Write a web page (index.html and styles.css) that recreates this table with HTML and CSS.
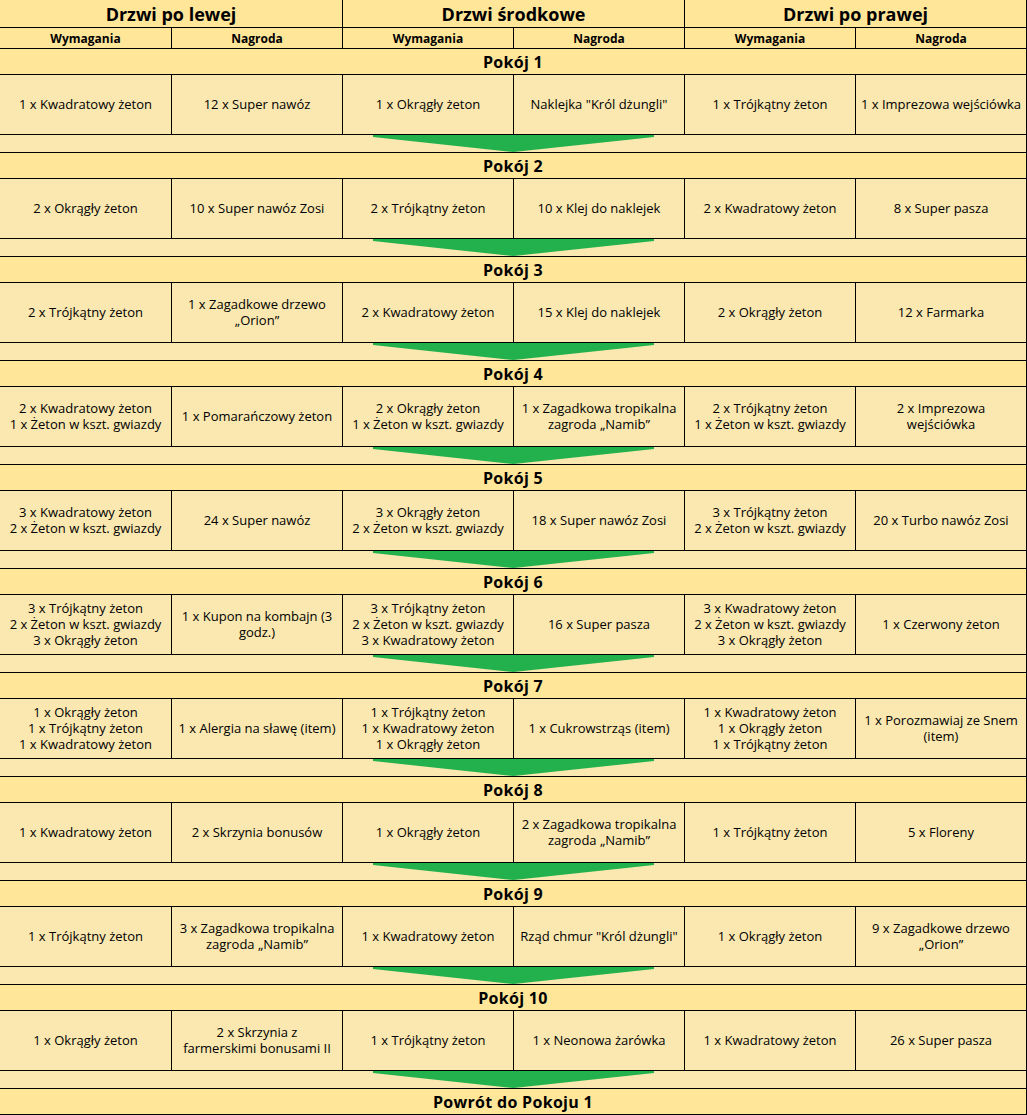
FILE: index.html
```html
<!DOCTYPE html>
<html lang="pl">
<head>
<meta charset="utf-8">
<link rel="stylesheet" href="styles.css">
</head>
<body>
<div class="grid">
  <div class="door span2">Drzwi po lewej</div>
  <div class="door span2">Drzwi środkowe</div>
  <div class="door span2">Drzwi po prawej</div>

  <div class="sub">Wymagania</div><div class="sub">Nagroda</div>
  <div class="sub">Wymagania</div><div class="sub">Nagroda</div>
  <div class="sub">Wymagania</div><div class="sub">Nagroda</div>

  <div class="room span6">Pokój 1</div>
  <div class="cell">1 x Kwadratowy żeton</div>
  <div class="cell">12 x Super nawóz</div>
  <div class="cell">1 x Okrągły żeton</div>
  <div class="cell">Naklejka "Król dżungli"</div>
  <div class="cell">1 x Trójkątny żeton</div>
  <div class="cell">1 x Imprezowa wejściówka</div>
  <div class="arrow span6"><svg width="281" height="17" viewBox="0 0 281 17"><polygon points="0,0 281,0 281,2 140.5,17 0,2" fill="#22b14c"/></svg></div>

  <div class="room span6">Pokój 2</div>
  <div class="cell">2 x Okrągły żeton</div>
  <div class="cell">10 x Super nawóz Zosi</div>
  <div class="cell">2 x Trójkątny żeton</div>
  <div class="cell">10 x Klej do naklejek</div>
  <div class="cell">2 x Kwadratowy żeton</div>
  <div class="cell">8 x Super pasza</div>
  <div class="arrow span6"><svg width="281" height="17" viewBox="0 0 281 17"><polygon points="0,0 281,0 281,2 140.5,17 0,2" fill="#22b14c"/></svg></div>

  <div class="room span6">Pokój 3</div>
  <div class="cell">2 x Trójkątny żeton</div>
  <div class="cell">1 x Zagadkowe drzewo<br>„Orion”</div>
  <div class="cell">2 x Kwadratowy żeton</div>
  <div class="cell">15 x Klej do naklejek</div>
  <div class="cell">2 x Okrągły żeton</div>
  <div class="cell">12 x Farmarka</div>
  <div class="arrow span6"><svg width="281" height="17" viewBox="0 0 281 17"><polygon points="0,0 281,0 281,2 140.5,17 0,2" fill="#22b14c"/></svg></div>

  <div class="room span6">Pokój 4</div>
  <div class="cell">2 x Kwadratowy żeton<br>1 x Żeton w kszt. gwiazdy</div>
  <div class="cell">1 x Pomarańczowy żeton</div>
  <div class="cell">2 x Okrągły żeton<br>1 x Żeton w kszt. gwiazdy</div>
  <div class="cell">1 x Zagadkowa tropikalna<br>zagroda „Namib”</div>
  <div class="cell">2 x Trójkątny żeton<br>1 x Żeton w kszt. gwiazdy</div>
  <div class="cell">2 x Imprezowa<br>wejściówka</div>
  <div class="arrow span6"><svg width="281" height="17" viewBox="0 0 281 17"><polygon points="0,0 281,0 281,2 140.5,17 0,2" fill="#22b14c"/></svg></div>

  <div class="room span6">Pokój 5</div>
  <div class="cell">3 x Kwadratowy żeton<br>2 x Żeton w kszt. gwiazdy</div>
  <div class="cell">24 x Super nawóz</div>
  <div class="cell">3 x Okrągły żeton<br>2 x Żeton w kszt. gwiazdy</div>
  <div class="cell">18 x Super nawóz Zosi</div>
  <div class="cell">3 x Trójkątny żeton<br>2 x Żeton w kszt. gwiazdy</div>
  <div class="cell">20 x Turbo nawóz Zosi</div>
  <div class="arrow span6"><svg width="281" height="17" viewBox="0 0 281 17"><polygon points="0,0 281,0 281,2 140.5,17 0,2" fill="#22b14c"/></svg></div>

  <div class="room span6">Pokój 6</div>
  <div class="cell">3 x Trójkątny żeton<br>2 x Żeton w kszt. gwiazdy<br>3 x Okrągły żeton</div>
  <div class="cell">1 x Kupon na kombajn (3<br>godz.)</div>
  <div class="cell">3 x Trójkątny żeton<br>2 x Żeton w kszt. gwiazdy<br>3 x Kwadratowy żeton</div>
  <div class="cell">16 x Super pasza</div>
  <div class="cell">3 x Kwadratowy żeton<br>2 x Żeton w kszt. gwiazdy<br>3 x Okrągły żeton</div>
  <div class="cell">1 x Czerwony żeton</div>
  <div class="arrow span6"><svg width="281" height="17" viewBox="0 0 281 17"><polygon points="0,0 281,0 281,2 140.5,17 0,2" fill="#22b14c"/></svg></div>

  <div class="room span6">Pokój 7</div>
  <div class="cell">1 x Okrągły żeton<br>1 x Trójkątny żeton<br>1 x Kwadratowy żeton</div>
  <div class="cell">1 x Alergia na sławę (item)</div>
  <div class="cell">1 x Trójkątny żeton<br>1 x Kwadratowy żeton<br>1 x Okrągły żeton</div>
  <div class="cell">1 x Cukrowstrząs (item)</div>
  <div class="cell">1 x Kwadratowy żeton<br>1 x Okrągły żeton<br>1 x Trójkątny żeton</div>
  <div class="cell">1 x Porozmawiaj ze Snem<br>(item)</div>
  <div class="arrow span6"><svg width="281" height="17" viewBox="0 0 281 17"><polygon points="0,0 281,0 281,2 140.5,17 0,2" fill="#22b14c"/></svg></div>

  <div class="room span6">Pokój 8</div>
  <div class="cell">1 x Kwadratowy żeton</div>
  <div class="cell">2 x Skrzynia bonusów</div>
  <div class="cell">1 x Okrągły żeton</div>
  <div class="cell">2 x Zagadkowa tropikalna<br>zagroda „Namib”</div>
  <div class="cell">1 x Trójkątny żeton</div>
  <div class="cell">5 x Floreny</div>
  <div class="arrow span6"><svg width="281" height="17" viewBox="0 0 281 17"><polygon points="0,0 281,0 281,2 140.5,17 0,2" fill="#22b14c"/></svg></div>

  <div class="room span6">Pokój 9</div>
  <div class="cell">1 x Trójkątny żeton</div>
  <div class="cell">3 x Zagadkowa tropikalna<br>zagroda „Namib”</div>
  <div class="cell">1 x Kwadratowy żeton</div>
  <div class="cell">Rząd chmur "Król dżungli"</div>
  <div class="cell">1 x Okrągły żeton</div>
  <div class="cell">9 x Zagadkowe drzewo<br>„Orion”</div>
  <div class="arrow span6"><svg width="281" height="17" viewBox="0 0 281 17"><polygon points="0,0 281,0 281,2 140.5,17 0,2" fill="#22b14c"/></svg></div>

  <div class="room span6">Pokój 10</div>
  <div class="cell">1 x Okrągły żeton</div>
  <div class="cell">2 x Skrzynia z<br>farmerskimi bonusami II</div>
  <div class="cell">1 x Trójkątny żeton</div>
  <div class="cell">1 x Neonowa żarówka</div>
  <div class="cell">1 x Kwadratowy żeton</div>
  <div class="cell">26 x Super pasza</div>
  <div class="arrow span6"><svg width="281" height="17" viewBox="0 0 281 17"><polygon points="0,0 281,0 281,2 140.5,17 0,2" fill="#22b14c"/></svg></div>

  <div class="room span6">Powrót do Pokoju 1</div>
</div>
</body>
</html>
```
FILE: styles.css
```css
html, body {
  margin: 0;
  padding: 0;
  background: #fae8b0;
}
body {
  font-family: "Open Sans", "DejaVu Sans", sans-serif;
  color: #000;
}
.grid {
  display: grid;
  width: 1027px;
  box-sizing: border-box;
  grid-template-columns: 171px repeat(5, 170px);
  grid-auto-rows: auto;
  gap: 1px;
  padding: 0 1px 1px 0;
  background: #000;
}
.grid > div {
  display: flex;
  align-items: center;
  justify-content: center;
  text-align: center;
  overflow: hidden;
  white-space: nowrap;
  box-sizing: border-box;
}
.span2 { grid-column: span 2; }
.span6 { grid-column: span 6; }
.door {
  height: 27px;
  background: #ffe699;
  font-weight: 700;
  font-size: 18px;
}
.sub {
  height: 20px;
  background: #ffe699;
  font-weight: 700;
  font-size: 12px;
}
.room {
  height: 25px;
  background: #ffe699;
  font-weight: 700;
  font-size: 16px;
  letter-spacing: 0.3px;
}
.cell {
  height: 59px;
  padding-bottom: 2px;
  background: #fae8b0;
  font-size: 13px;
  line-height: 16px;
}
.arrow {
  height: 17px;
  background: #fae8b0;
  align-items: flex-start !important;
}
.arrow svg {
  display: block;
}
```
